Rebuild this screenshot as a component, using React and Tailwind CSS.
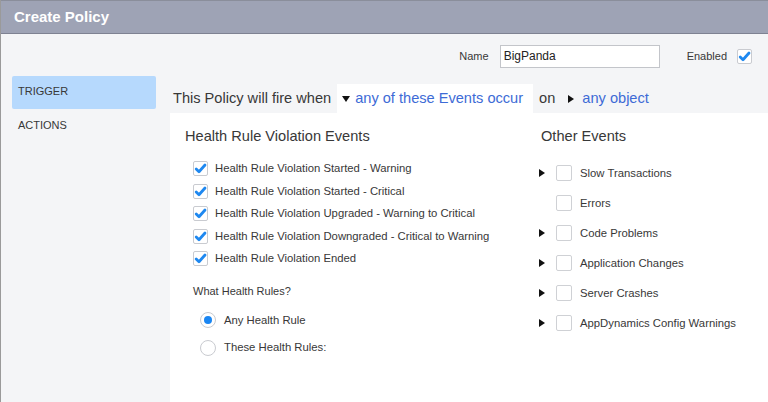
import React from 'react';

const Check = ({ checked }) => (
  <span className="w-[15px] h-[15px] bg-white border border-[#c9cbd0] rounded-[2px] flex items-center justify-center shrink-0">
    {checked && (
      <svg width="13" height="13" viewBox="0 0 13 13">
        <path d="M2.2 7 L5 9.8 L11 3" fill="none" stroke="#1e88f0" strokeWidth="2.8" strokeLinecap="round" strokeLinejoin="round" />
      </svg>
    )}
  </span>
);

const Radio = ({ checked }) => (
  <span className="w-[16px] h-[16px] bg-white border border-[#c9cbd0] rounded-full flex items-center justify-center shrink-0">
    {checked && <span className="w-[8px] h-[8px] rounded-full bg-[#1a86f2]" />}
  </span>
);

const TriRight = () => (
  <svg width="6" height="8" viewBox="0 0 6 8"><path d="M0 0 L6 4 L0 8 Z" fill="#111" /></svg>
);

const TriDown = () => (
  <svg width="8" height="6" viewBox="0 0 8 6"><path d="M0 0 L8 0 L4 6 Z" fill="#111" /></svg>
);

const hrEvents = [
  'Health Rule Violation Started - Warning',
  'Health Rule Violation Started - Critical',
  'Health Rule Violation Upgraded - Warning to Critical',
  'Health Rule Violation Downgraded - Critical to Warning',
  'Health Rule Violation Ended',
];

const otherEvents = [
  { label: 'Slow Transactions', expand: true },
  { label: 'Errors', expand: false },
  { label: 'Code Problems', expand: true },
  { label: 'Application Changes', expand: true },
  { label: 'Server Crashes', expand: true },
  { label: 'AppDynamics Config Warnings', expand: true },
];

export default function App() {
  return (
    <div className="w-[768px] h-[402px] overflow-hidden flex flex-col border-l border-[#9a9a9a] bg-[#f4f5f7] text-[#383838] font-['Liberation_Sans',Arial,sans-serif]">
      {/* HEADER */}
      <div className="h-[34px] shrink-0 bg-[#9ea3b5] border-t border-[#8a8e9b] border-b border-b-[#7e8292] flex items-center pl-[13px]">
        <span className="text-white font-bold text-[15px]">Create Policy</span>
      </div>

      {/* NAME ROW */}
      <div className="flex items-center justify-end pt-[2px] pr-[16px] h-[42px] shrink-0 text-[11px]">
        <span className="mr-[11px]">Name</span>
        <div className="w-[160px] h-[23px] bg-white border border-[#c3c5ca] flex items-center px-[3px] text-[12px] text-[#222]">BigPanda</div>
        <span className="ml-[27px] mr-[10px]">Enabled</span>
        <Check checked />
      </div>

      {/* MAIN */}
      <div className="flex flex-1 min-h-0">
        {/* LEFT NAV */}
        <div className="w-[169px] shrink-0 pl-[11px] pr-[14px] text-[11px]">
          <div className="h-[33px] rounded-[2px] bg-[#b6d9fd] flex items-center pl-[6px] pb-[2px]">TRIGGER</div>
          <div className="h-[33px] flex items-center pl-[6px]">ACTIONS</div>
        </div>

        {/* CONTENT */}
        <div className="flex-1 flex flex-col pt-[8px]">
          <div className="h-[29px] flex items-center text-[14.6px] shrink-0">
            <span className="pl-[3px] pr-[6px]">This Policy will fire when</span>
            <span className="h-full bg-white flex items-center pl-[5px] pr-[10px]">
              <TriDown />
              <span className="ml-[5px] text-[#3d6bd6]">any of these Events occur</span>
            </span>
            <span className="ml-[6px] mr-[13px]">on</span>
            <TriRight />
            <span className="ml-[8px] text-[#3d6bd6]">any object</span>
          </div>

          <div className="flex-1 bg-white flex">
            {/* Health Rule column */}
            <div className="w-[369px] shrink-0 pl-[15px] pt-[14px]">
              <div className="text-[14.6px] h-[18px] leading-[18px]">Health Rule Violation Events</div>
              <div className="mt-[16px] pl-[8px] flex flex-col gap-[7.5px]">
                {hrEvents.map(e => (
                  <div key={e} className="flex items-center gap-[7px] h-[15px] text-[11.3px]">
                    <Check checked />
                    <span>{e}</span>
                  </div>
                ))}
              </div>
              <div className="mt-[17px] pl-[8px] text-[11px]">What Health Rules?</div>
              <div className="mt-[12px] pl-[15px] flex flex-col gap-[11px] text-[11.3px]">
                <div className="flex items-center gap-[8px]"><Radio checked /><span>Any Health Rule</span></div>
                <div className="flex items-center gap-[8px]"><Radio /><span>These Health Rules:</span></div>
              </div>
            </div>

            {/* Other Events column */}
            <div className="flex-1 pt-[14px]">
              <div className="text-[14.6px] h-[18px] leading-[18px] pl-[2px]">Other Events</div>
              <div className="mt-[20px] flex flex-col gap-[14px]">
                {otherEvents.map(o => (
                  <div key={o.label} className="flex items-center h-[16px] text-[11.3px]">
                    <span className="w-[17px] flex items-center">{o.expand && <TriRight />}</span>
                    <span className="w-[16px] h-[16px] bg-white border border-[#cfd1d5] rounded-[2px] shrink-0" />
                    <span className="ml-[8px]">{o.label}</span>
                  </div>
                ))}
              </div>
            </div>
          </div>
        </div>
      </div>
    </div>
  );
}
